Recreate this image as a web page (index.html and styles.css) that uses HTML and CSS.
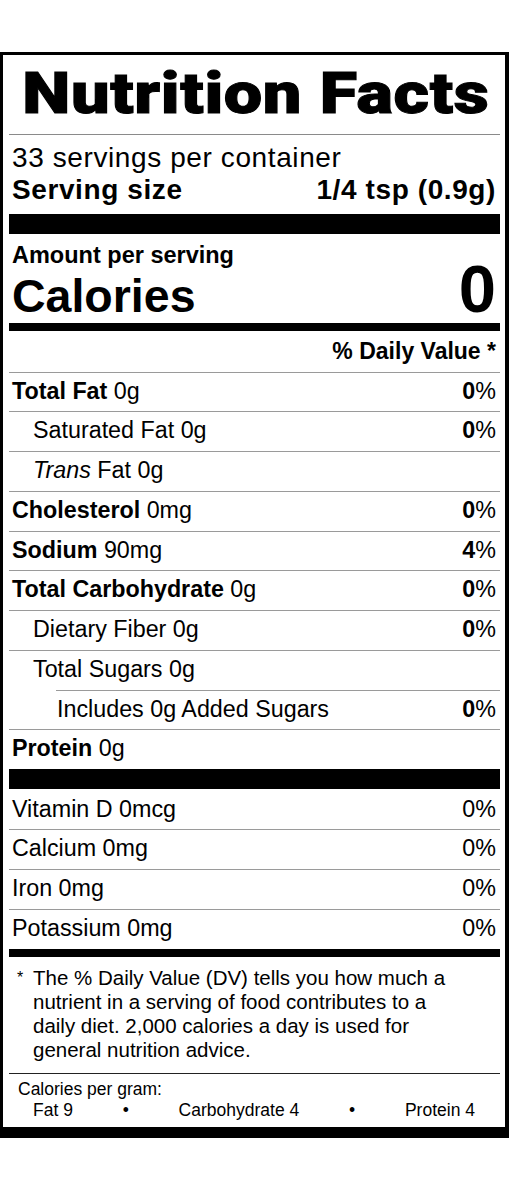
FILE: index.html
```html
<!DOCTYPE html>
<html lang="en">
<head>
<meta charset="utf-8">
<title>Nutrition Facts</title>
<link rel="stylesheet" href="styles.css">
</head>
<body>
<div class="page">
  <section class="label">
    <h1 class="title"><span class="title-text">Nutrition Facts</span></h1>
    <div class="servings">
      <div class="serv-count">33 servings per container</div>
      <div class="serv-size"><span>Serving size</span><span>1/4 tsp (0.9g)</span></div>
    </div>
    <div class="bar-xl"></div>
    <div class="amount">Amount per serving</div>
    <div class="cal-row"><span class="cal-label">Calories</span><span class="cal-value">0</span></div>
    <div class="bar-md"></div>
    <div class="dv-head">% Daily Value *</div>
    <div class="rows">
      <div class="row"><span><b>Total Fat</b> 0g</span><span><b>0</b>%</span></div>
      <div class="row indent"><span>Saturated Fat 0g</span><span><b>0</b>%</span></div>
      <div class="row indent"><span><i>Trans</i> Fat 0g</span><span></span></div>
      <div class="row"><span><b>Cholesterol</b> 0mg</span><span><b>0</b>%</span></div>
      <div class="row"><span><b>Sodium</b> 90mg</span><span><b>4</b>%</span></div>
      <div class="row"><span><b>Total Carbohydrate</b> 0g</span><span><b>0</b>%</span></div>
      <div class="row indent"><span>Dietary Fiber 0g</span><span><b>0</b>%</span></div>
      <div class="row indent"><span>Total Sugars 0g</span><span></span></div>
      <div class="row indent2"><span>Includes 0g Added Sugars</span><span><b>0</b>%</span></div>
      <div class="row"><span><b>Protein</b> 0g</span><span></span></div>
    </div>
    <div class="bar-xl"></div>
    <div class="rows vits">
      <div class="row"><span>Vitamin D 0mcg</span><span>0%</span></div>
      <div class="row"><span>Calcium 0mg</span><span>0%</span></div>
      <div class="row"><span>Iron 0mg</span><span>0%</span></div>
      <div class="row"><span>Potassium 0mg</span><span>0%</span></div>
    </div>
    <div class="bar-md"></div>
    <div class="fn">
      <span class="fn-star">*</span>
      <p class="fn-text">The % Daily Value (DV) tells you how much a nutrient in a serving of food contributes to a daily diet. 2,000 calories a day is used for general nutrition advice.</p>
    </div>
    <div class="cpg">
      <div>Calories per gram:</div>
      <div class="cpg-items"><span>Fat 9</span><span>&bull;</span><span>Carbohydrate 4</span><span>&bull;</span><span>Protein 4</span></div>
    </div>
  </section>
</div>
</body>
</html>
```

FILE: styles.css
```css
html, body {
  margin: 0;
  padding: 0;
  background: #fff;
}
body {
  font-family: "Liberation Sans", Arial, sans-serif;
  color: #000;
}
.page {
  padding-top: 52px;
}
.label {
  border-style: solid;
  border-color: #000;
  border-width: 3px 4px 11px 3px;
  padding: 0 5px 0 6px;
}
.title {
  margin: 0;
  font-family: Roboto, "Liberation Sans", sans-serif;
  font-weight: 900;
  font-size: 58px;
  line-height: 77px;
  padding: 0 0 2px 2px;
  text-align: center;
  white-space: nowrap;
  border-bottom: 1px solid #8a8a8a;
}
.title-text {
  display: inline-block;
  letter-spacing: 0.5px;
  -webkit-text-stroke: 1px #000;
  transform: scaleX(1.18);
  transform-origin: 50% 50%;
}
.servings {
  padding: 7px 4px 8px 3px;
  font-size: 28px;
  line-height: 32px;
  letter-spacing: 0.6px;
}
.serv-size {
  display: flex;
  justify-content: space-between;
  font-weight: bold;
}
.bar-xl {
  height: 20px;
  background: #000;
}
.bar-md {
  height: 8px;
  background: #000;
}
.amount {
  padding: 8px 4px 0 3px;
  font-weight: bold;
  font-size: 23.5px;
  line-height: 27px;
}
.cal-row {
  display: flex;
  justify-content: space-between;
  align-items: baseline;
  line-height: 40px;
  padding: 0 4px 7px 3px;
  font-weight: bold;
}
.cal-label {
  font-size: 46.5px;
}
.cal-value {
  font-size: 67px;
}
.dv-head {
  text-align: right;
  font-weight: bold;
  font-size: 23px;
  line-height: 37px;
  padding: 2px 4px 1.5px 3px;
}
.row {
  display: flex;
  justify-content: space-between;
  border-top: 1px solid #9a9a9a;
  height: 38.75px;
  line-height: 37px;
  font-size: 23.3px;
  padding: 0 4px 0 3px;
  white-space: nowrap;
}
.row b {
  font-weight: bold;
}
.row.indent {
  padding-left: 24px;
}
.row.indent2 {
  margin-left: 47px;
  padding-left: 1px;
}
.vits .row:first-child {
  border-top: none;
  padding-top: 1.5px;
}
.fn {
  display: flex;
  padding: 9.4px 35px 11.4px 0;
  border-bottom: 1px solid #222;
  font-size: 20.5px;
  line-height: 24px;
}
.fn-star {
  flex: 0 0 24px;
  box-sizing: border-box;
  padding-left: 8px;
  font-size: 16px;
}
.fn-text {
  flex: 1;
  margin: 0;
}
.cpg {
  padding: 5.1px 0 6.3px 9px;
  font-size: 17.5px;
  line-height: 20.5px;
}
.cpg-items {
  display: flex;
  justify-content: space-between;
  padding: 0 25px 0 15px;
}
```
